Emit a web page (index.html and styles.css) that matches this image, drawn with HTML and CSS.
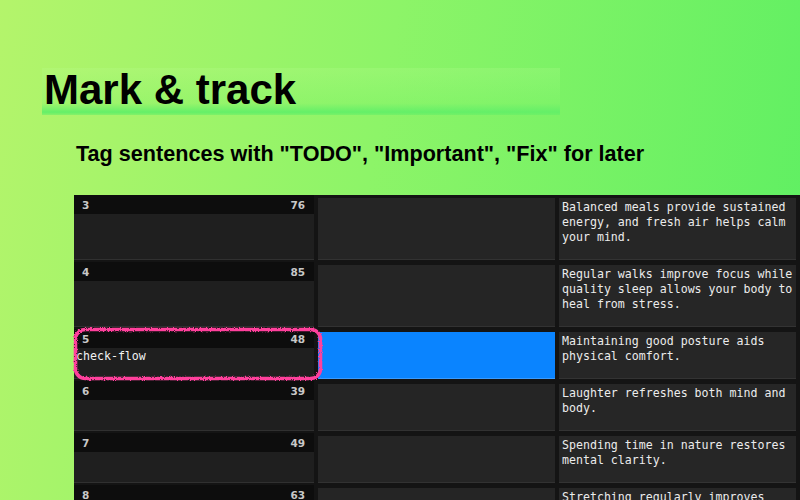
FILE: index.html
```html
<!DOCTYPE html>
<html>
<head>
<meta charset="utf-8">
<link rel="stylesheet" href="styles.css">
</head>
<body>
<div class="page">
  <div class="title-band"><h1 class="title">Mark &amp; track</h1></div>
  <p class="subtitle">Tag sentences with "TODO", "Important", "Fix" for later</p>
  <div class="panel">
    <div class="row">
      <div class="cell-id"><div class="id-head"><span>3</span><span>76</span></div><div class="id-body"></div></div>
      <div class="cell-mid"></div>
      <div class="cell-text">Balanced meals provide sustained energy, and fresh air helps calm your mind.</div>
    </div>
    <div class="row">
      <div class="cell-id"><div class="id-head"><span>4</span><span>85</span></div><div class="id-body"></div></div>
      <div class="cell-mid"></div>
      <div class="cell-text">Regular walks improve focus while quality sleep allows your body to heal from stress.</div>
    </div>
    <div class="row">
      <div class="cell-id marked"><div class="id-head"><span>5</span><span>48</span></div><div class="id-body tag">check-flow</div>
        <svg class="scribble" viewBox="0 0 250 56" preserveAspectRatio="none">
          <defs>
            <filter id="rough" x="-5%" y="-10%" width="110%" height="120%">
              <feTurbulence type="fractalNoise" baseFrequency="1.2" numOctaves="2" seed="5"/>
              <feDisplacementMap in="SourceGraphic" scale="3.5"/>
            </filter>
          </defs>
          <rect x="2.5" y="2.5" width="245" height="51" rx="10" ry="10" fill="none" stroke="#ff3f9c" stroke-width="3.6" filter="url(#rough)"/>
        </svg>
      </div>
      <div class="cell-mid selected"></div>
      <div class="cell-text">Maintaining good posture aids physical comfort.</div>
    </div>
    <div class="row">
      <div class="cell-id"><div class="id-head"><span>6</span><span>39</span></div><div class="id-body"></div></div>
      <div class="cell-mid"></div>
      <div class="cell-text">Laughter refreshes both mind and body.</div>
    </div>
    <div class="row">
      <div class="cell-id"><div class="id-head"><span>7</span><span>49</span></div><div class="id-body"></div></div>
      <div class="cell-mid"></div>
      <div class="cell-text">Spending time in nature restores mental clarity.</div>
    </div>
    <div class="row">
      <div class="cell-id"><div class="id-head"><span>8</span><span>63</span></div><div class="id-body"></div></div>
      <div class="cell-mid"></div>
      <div class="cell-text">Stretching regularly improves flexibility.</div>
    </div>
  </div>
</div>
</body>
</html>
```
FILE: styles.css
```css
html, body {
  margin: 0;
  padding: 0;
  width: 800px;
  height: 500px;
  overflow: hidden;
}
body {
  background: linear-gradient(100deg, #b4f46b 0%, #8df468 45%, #5cef62 100%);
  font-family: "Liberation Sans", Arial, sans-serif;
}
.page {
  padding-top: 68px;
}
.title-band {
  margin-left: 42px;
  width: 518px;
  height: 47px;
  background: linear-gradient(to bottom, rgba(190, 255, 150, 0.2) 0%, rgba(130, 245, 110, 0.3) 75%, #64ef68 94%, rgba(98, 239, 102, 0.5) 100%);
}
.title {
  margin: 0;
  padding-left: 2px;
  font-size: 42px;
  font-weight: bold;
  line-height: 44px;
  color: #000;
}
.subtitle {
  margin: 27px 0 0 76px;
  font-size: 21.6px;
  font-weight: bold;
  line-height: 24px;
  color: #000;
}
.panel {
  margin: 29px 0 0 74px;
  background: #141414;
  padding-right: 4px;
}
.row {
  display: grid;
  grid-template-columns: 240px 237px 237px;
  column-gap: 4px;
}
.cell-id {
  display: flex;
  flex-direction: column;
  margin-bottom: 2px;
}
.id-head {
  height: 19px;
  background: #0d0d0d;
  display: flex;
  justify-content: space-between;
  align-items: center;
  padding: 0 9px 0 8px;
  font-family: "DejaVu Sans", sans-serif;
  font-size: 10.5px;
  font-weight: bold;
  color: #c8c8c8;
}
.id-body {
  flex: 1;
  background: #1f1f1f;
  border-bottom: 1px solid #303030;
}
.tag {
  font-family: "DejaVu Sans Mono", monospace;
  font-size: 11.6px;
  color: #f2f2f2;
  padding: 1px 0 0 2px;
  line-height: 15px;
}
.marked {
  position: relative;
}
.scribble {
  position: absolute;
  left: -1px;
  top: -2px;
  width: 250px;
  height: 54px;
  pointer-events: none;
}
.cell-mid {
  margin: 3px 0 2px 0;
  background: #252525;
  border-bottom: 1px solid #323232;
}
.cell-mid.selected {
  background: #0a84ff;
  border-bottom: 1px solid #3a9bff;
}
.cell-text {
  margin: 3px 0 2px 0;
  background: #262626;
  border-bottom: 1px solid #333;
  padding: 2px 3px 14px 3px;
  font-family: "DejaVu Sans Mono", monospace;
  font-size: 11.6px;
  line-height: 15px;
  color: #ececec;
}
```
